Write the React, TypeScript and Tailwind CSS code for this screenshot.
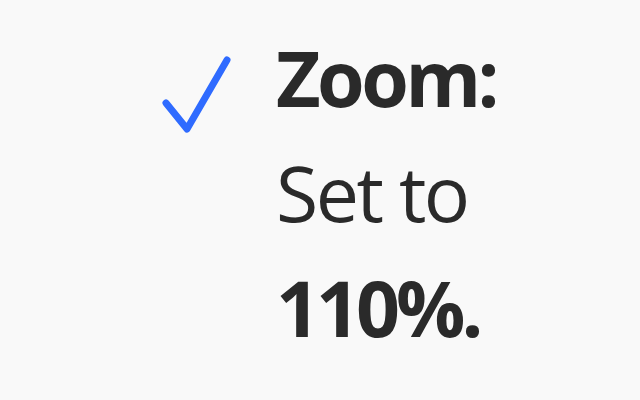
export default function App() {
  return (
    <div className="w-[640px] h-[400px] bg-[#f9f9f9] flex items-start pl-[160px] pt-[20px] gap-[46px]" style={{ fontFamily: '"Open Sans", "Noto Sans", sans-serif' }}>
      <svg width="72" height="82" viewBox="0 0 72 82" className="mt-[34px] shrink-0">
        <path d="M6 49 L27 75 L67 6" fill="none" stroke="#2f6bff" strokeWidth="7" strokeLinecap="round" strokeLinejoin="round" />
      </svg>
      <div className="flex flex-col text-[#2a2a2a] text-[77px] leading-[115px] -ml-[2px]">
        <span className="font-bold tracking-[-3.5px]">Zoom:</span>
        <span className="tracking-[-2.5px]">Set to</span>
        <span className="font-bold tracking-[-4px]">110%.</span>
      </div>
    </div>
  );
}
